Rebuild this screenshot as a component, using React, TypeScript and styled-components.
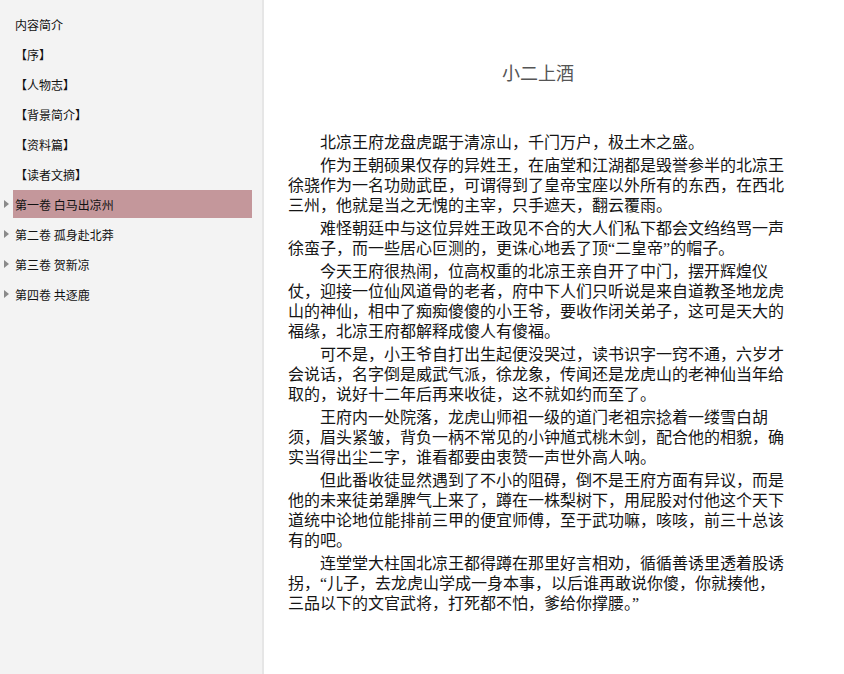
import * as React from "react"
import styled, { createGlobalStyle } from "styled-components"

const GlobalStyle = createGlobalStyle`
  html, body {
    margin: 0;
    padding: 0;
    background: #ffffff;
  }
  * {
    box-sizing: border-box;
  }
`

const Shell = styled.div`
  display: flex;
  height: 100vh;
  overflow: hidden;
  font-family: "Noto Sans CJK SC", "Liberation Sans", sans-serif;
`

const Sidebar = styled.nav`
  width: 264px;
  flex: none;
  background: #f3f3f3;
  border-right: 2px solid #e6e6e6;
  padding: 9px 10px 0 0;
`

const TocRow = styled.div`
  position: relative;
  height: 30px;
  padding: 1px 0 1px 13px;
`

const Arrow = styled.span`
  position: absolute;
  left: 4px;
  top: 11px;
  width: 0;
  height: 0;
  border-top: 4px solid transparent;
  border-bottom: 4px solid transparent;
  border-left: 5px solid #8a8a8a;
`

const TocLabel = styled.div<{ active?: boolean }>`
  height: 28px;
  display: flex;
  align-items: center;
  padding-left: 2px;
  font-size: 12px;
  color: #111;
  white-space: nowrap;
  background: ${p => (p.active ? "#c4979b" : "transparent")};
`

const Reader = styled.main`
  flex: 1;
  padding: 0 0 0 24px;
  overflow: hidden;
`

const Column = styled.article`
  width: 500px;
  font-family: "Liberation Serif", "Noto Sans CJK SC", serif;
`

const Title = styled.h1`
  margin: 62px 0 0;
  font-size: 18px;
  line-height: 24px;
  font-weight: normal;
  text-align: center;
  color: #555;
`

const Body = styled.div`
  margin-top: 47px;
`

const Para = styled.p`
  margin: 0 0 3px;
  text-indent: 2em;
  font-size: 16px;
  line-height: 20px;
  color: #151515;
`

const toc = [
  { label: "内容简介" },
  { label: "【序】" },
  { label: "【人物志】" },
  { label: "【背景简介】" },
  { label: "【资料篇】" },
  { label: "【读者文摘】" },
  { label: "第一卷 白马出凉州", arrow: true, active: true },
  { label: "第二卷 孤身赴北莽", arrow: true },
  { label: "第三卷 贺新凉", arrow: true },
  { label: "第四卷 共逐鹿", arrow: true },
]

const paragraphs = [
  "北凉王府龙盘虎踞于清凉山，千门万户，极土木之盛。",
  "作为王朝硕果仅存的异姓王，在庙堂和江湖都是毁誉参半的北凉王徐骁作为一名功勋武臣，可谓得到了皇帝宝座以外所有的东西，在西北三州，他就是当之无愧的主宰，只手遮天，翻云覆雨。",
  "难怪朝廷中与这位异姓王政见不合的大人们私下都会文绉绉骂一声徐蛮子，而一些居心叵测的，更诛心地丢了顶“二皇帝”的帽子。",
  "今天王府很热闹，位高权重的北凉王亲自开了中门，摆开辉煌仪仗，迎接一位仙风道骨的老者，府中下人们只听说是来自道教圣地龙虎山的神仙，相中了痴痴傻傻的小王爷，要收作闭关弟子，这可是天大的福缘，北凉王府都解释成傻人有傻福。",
  "可不是，小王爷自打出生起便没哭过，读书识字一窍不通，六岁才会说话，名字倒是威武气派，徐龙象，传闻还是龙虎山的老神仙当年给取的，说好十二年后再来收徒，这不就如约而至了。",
  "王府内一处院落，龙虎山师祖一级的道门老祖宗捻着一缕雪白胡须，眉头紧皱，背负一柄不常见的小钟馗式桃木剑，配合他的相貌，确实当得出尘二字，谁看都要由衷赞一声世外高人呐。",
  "但此番收徒显然遇到了不小的阻碍，倒不是王府方面有异议，而是他的未来徒弟犟脾气上来了，蹲在一株梨树下，用屁股对付他这个天下道统中论地位能排前三甲的便宜师傅，至于武功嘛，咳咳，前三十总该有的吧。",
  "连堂堂大柱国北凉王都得蹲在那里好言相劝，循循善诱里透着股诱拐，“儿子，去龙虎山学成一身本事，以后谁再敢说你傻，你就揍他，三品以下的文官武将，打死都不怕，爹给你撑腰。”",
]

export default function App() {
  return (
    <Shell>
      <GlobalStyle />
      <Sidebar>
        {toc.map(item => (
          <TocRow key={item.label}>
            {item.arrow && <Arrow />}
            <TocLabel active={item.active}>{item.label}</TocLabel>
          </TocRow>
        ))}
      </Sidebar>
      <Reader>
        <Column>
          <Title>小二上酒</Title>
          <Body>
            {paragraphs.map((text, i) => (
              <Para key={i}>{text}</Para>
            ))}
          </Body>
        </Column>
      </Reader>
    </Shell>
  )
}
